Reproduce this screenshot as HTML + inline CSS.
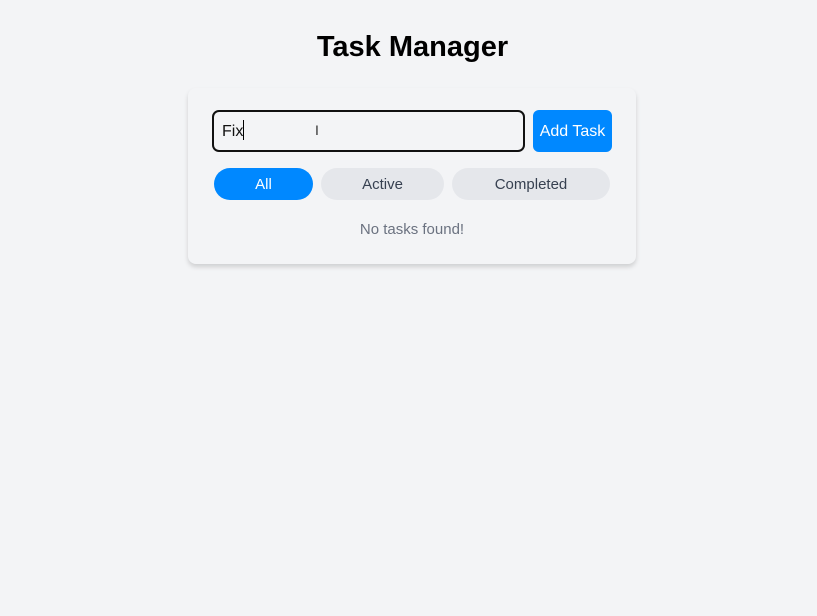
<!DOCTYPE html>
<html><head><style>
body{margin:0;background:#f3f4f6;font-family:"Liberation Sans",sans-serif;width:817px;height:616px;position:relative;overflow:hidden}
h1{position:absolute;top:29px;left:4px;width:817px;text-align:center;margin:0;font-size:29px;font-weight:bold;color:#000;line-height:36px}
.card{position:absolute;left:188px;top:88px;width:448px;height:176px;background:#f3f4f6;border-radius:8px;box-shadow:0 3px 5px rgba(0,0,0,0.15)}
.in{position:absolute;left:212px;top:110px;height:38px;border:2px solid #111;border-radius:7px;font-size:16px;line-height:40px;padding-left:8px;box-sizing:content-box;width:301px;color:#111}
.btn{position:absolute;left:533px;top:110px;width:79px;height:42px;background:#0088ff;color:#fff;border-radius:6px;font-size:16px;line-height:44px;text-align:center}
.f{position:absolute;top:168px;height:32px;line-height:34px;border-radius:16px;text-align:center;font-size:15px;background:#e5e7eb;color:#374151}
.msg{position:absolute;left:188px;width:448px;top:221px;text-align:center;color:#6b7280;font-size:15px}
</style></head><body>
<h1>Task Manager</h1>
<div class="card"></div>
<div class="in">Fix<span style="display:inline-block;width:1px;height:20px;background:#000;vertical-align:-4px"></span></div>
<div style="position:absolute;left:315px;top:122px;font-size:14px;color:#333">I</div>
<div class="btn">Add Task</div>
<div class="f" style="left:214px;width:99px;background:#0088ff;color:#fff">All</div>
<div class="f" style="left:321px;width:123px">Active</div>
<div class="f" style="left:452px;width:158px">Completed</div>
<div class="msg">No tasks found!</div>
</body></html>
